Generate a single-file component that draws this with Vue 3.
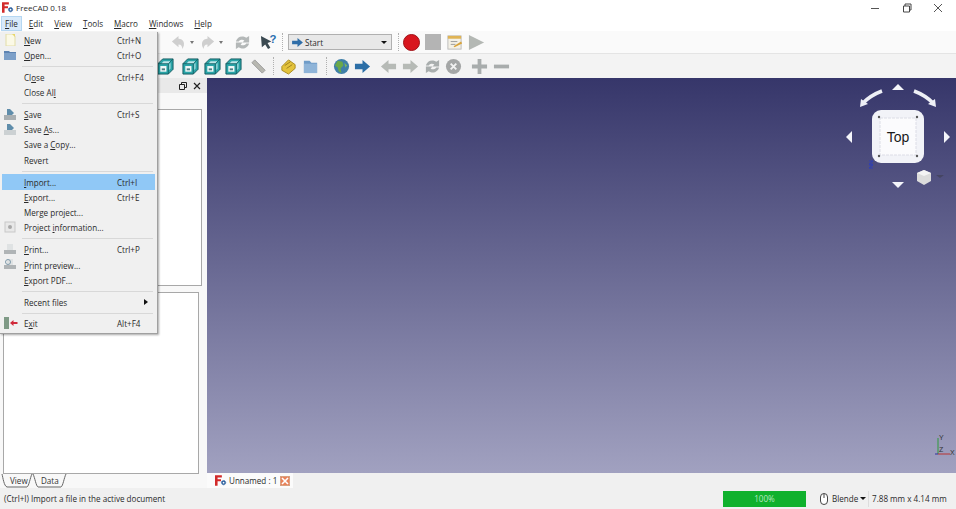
<script setup>
const menus = ["File", "Edit", "View", "Tools", "Macro", "Windows", "Help"];

const fileMenu = [
  { pre: "", key: "N", post: "ew", shortcut: "Ctrl+N", icon: "new" },
  { pre: "", key: "O", post: "pen...", shortcut: "Ctrl+O", icon: "open" },
  { sep: true },
  { pre: "Cl", key: "o", post: "se", shortcut: "Ctrl+F4" },
  { pre: "Close Al", key: "l", post: "" },
  { sep: true },
  { pre: "", key: "S", post: "ave", shortcut: "Ctrl+S", icon: "save" },
  { pre: "Save ", key: "A", post: "s...", icon: "saveas" },
  { pre: "Save a ", key: "C", post: "opy..." },
  { pre: "Revert", key: "", post: "" },
  { sep: true },
  { pre: "", key: "I", post: "mport...", shortcut: "Ctrl+I", active: true },
  { pre: "", key: "E", post: "xport...", shortcut: "Ctrl+E" },
  { pre: "Merge project...", key: "", post: "" },
  { pre: "Project ", key: "i", post: "nformation...", icon: "info" },
  { sep: true },
  { pre: "", key: "P", post: "rint...", shortcut: "Ctrl+P", icon: "print" },
  { pre: "", key: "P", post: "rint preview...", icon: "preview" },
  { pre: "", key: "E", post: "xport PDF..." },
  { sep: true },
  { pre: "Recent files", key: "", post: "", arrow: true },
  { sep: true },
  { pre: "E", key: "x", post: "it", shortcut: "Alt+F4", icon: "exit" },
];

// spacing classes of the four view cubes in the second toolbar
const viewCubes = ["ml0", "ml8", "ml5", "ml4"];
</script>

<template>
  <div class="window">
    <header class="titlebar">
      <svg class="app-logo" viewBox="0 0 14 12" width="12" height="11">
        <path d="M0 0h8v2.500H3v2h4v2.400H3V12H0z" fill="#d22a2a" />
        <circle cx="10" cy="8.500" r="2.500" fill="#2b5f9e" stroke="#2b5f9e" stroke-dasharray="1 0.600" />
        <circle cx="10" cy="8.500" r="1" fill="#fff" />
      </svg>
      <span class="title">FreeCAD 0.18</span>
      <div class="win-buttons">
        <svg viewBox="0 0 10 10" width="10" height="10"><path d="M0 5.500h8" stroke="#555" fill="none" /></svg>
        <svg viewBox="0 0 10 10" width="10" height="10"><path d="M1.500 3h6v6h-6zM3 3V1h6v6H7.500" stroke="#444" fill="none" /></svg>
        <svg viewBox="0 0 10 10" width="10" height="10"><path d="M1 1l8 8M9 1l-8 8" stroke="#555" fill="none" /></svg>
      </div>
    </header>

    <nav class="menubar">
      <span v-for="(m, i) in menus" :key="m" class="menu-title" :class="{ open: i === 0 }"><u>{{ m[0] }}</u>{{ m.slice(1) }}</span>
    </nav>

    <div class="toolbar row-one">
      <svg class="tool" viewBox="0 0 18 18"><path d="M9 2L2 8l7 6v-3c3 0 4 2 4 5 4-6 1-11-4-11z" fill="#cfcfcf" /></svg>
      <span class="drop"></span>
      <svg class="tool ml5" viewBox="0 0 18 18"><path d="M9 2l7 6-7 6v-3c-3 0-4 2-4 5-4-6-1-11 4-11z" fill="#cfcfcf" /></svg>
      <span class="drop"></span>
      <svg class="tool ml11" viewBox="0 0 18 18"><path d="M2 8a7 7 0 0 1 11-4l3-2v7h-7l2-2A4 4 0 0 0 5 8zM16 10a7 7 0 0 1-11 4l-3 2V9h7l-2 2a4 4 0 0 0 6-1z" fill="#b4b8b8" /></svg>
      <svg class="tool ml9" viewBox="0 0 18 18">
        <path d="M1 2l11 6-4 1.500 3 5-2.500 1.500-3-5L2 14z" fill="#3b4a52" />
        <text x="10" y="10" font-size="12" font-weight="700" fill="#2a6fb0" font-family="Liberation Sans, sans-serif">?</text>
      </svg>
      <span class="grip ml5"></span>
      <div class="combo ml5">
        <svg viewBox="0 0 12 10" width="11" height="9"><path d="M0 3h6V0l6 5-6 5V7H0z" fill="#2f6ea8" /></svg>
        <span>Start</span>
        <i class="combo-caret"></i>
      </div>
      <span class="grip ml6"></span>
      <span class="record"></span>
      <span class="stop ml5"></span>
      <svg class="tool ml5" viewBox="0 0 18 18">
        <rect x="2" y="2" width="14" height="14" fill="#f4f1e6" stroke="#bbb" />
        <path d="M2 2h14v3H2z" fill="#e0b455" />
        <path d="M5 8h7M5 11h5" stroke="#999" />
        <path d="M8 13l8-5 1 2-8 4z" fill="#d8a33a" />
      </svg>
      <svg class="tool ml5" viewBox="0 0 18 18"><path d="M1 1l16 8-16 8z" fill="#b4b8b4" /></svg>
    </div>

    <div class="toolbar row-two">
      <svg v-for="c in viewCubes" :key="c" class="tool" :class="c" viewBox="0 0 18 18">
        <path d="M1 6l5-5h11v11l-5 5H1z" fill="#2aa5a8" stroke="#125a60" />
        <path d="M3.500 8.500H10v6H3.500z" fill="#f2f8f8" />
        <path d="M5 11h3.500v2H5z" fill="#4c7f84" />
        <path d="M7 3.500h7.500L12 6H4.500z" fill="#bfe6e8" />
        <path d="M14.500 5v6L12.500 13V7z" fill="#8ad0d2" />
        <path d="M1 6h11v11M12 6l5-5" fill="none" stroke="#125a60" stroke-width="0.800" />
      </svg>
      <svg class="tool ml8" viewBox="0 0 18 18"><path d="M5 2l11 11-3 3L2 5z" fill="#b7b7b0" stroke="#999" /></svg>
      <span class="grip narrow"></span>
      <svg class="tool ml6" viewBox="0 0 18 18">
        <path d="M2 9l7-7 7 5v4l-7 6-7-4z" fill="#e4c33c" stroke="#a88a1e" />
        <path d="M5 8l6-4M7 11l6-4" stroke="#9a7f1c" fill="none" />
      </svg>
      <svg class="tool ml5" viewBox="0 0 18 18">
        <path d="M2 3h6l2 2h6v11H2z" fill="#6f9cc8" />
        <path d="M2 6h14v10H2z" fill="#8fb4d8" />
      </svg>
      <span class="grip narrow"></span>
      <svg class="tool ml6" viewBox="0 0 18 18">
        <circle cx="9" cy="9" r="8" fill="#3f7fa8" />
        <path d="M5 3l5 1 1 4-3 3 1 5-3-2-1-4-3-2z" fill="#6aa84a" />
        <path d="M12 5l3 3-2 2z" fill="#7db85a" />
      </svg>
      <svg class="tool ml4" viewBox="0 0 18 18"><path d="M1 6h8V2l8 7-8 7v-4H1z" fill="#2b6ea6" /></svg>
      <svg class="tool ml9" viewBox="0 0 18 18"><path d="M17 6H9V2L1 9l8 7v-4h8z" fill="#b6bab6" /></svg>
      <svg class="tool ml5" viewBox="0 0 18 18"><path d="M1 6h8V2l8 7-8 7v-4H1z" fill="#b6bab6" /></svg>
      <svg class="tool ml5" viewBox="0 0 18 18"><path d="M2 8a7 7 0 0 1 11-4l3-2v7h-7l2-2A4 4 0 0 0 5 8zM16 10a7 7 0 0 1-11 4l-3 2V9h7l-2 2a4 4 0 0 0 6-1z" fill="#a9aeae" /></svg>
      <svg class="tool ml4" viewBox="0 0 18 18">
        <circle cx="9" cy="9" r="8" fill="#a4a6a6" />
        <path d="M6 6l6 6M12 6l-6 6" stroke="#f2f2f2" stroke-width="2" />
      </svg>
      <svg class="tool ml9" viewBox="0 0 18 18"><path d="M7 1h4v6h6v4h-6v6H7v-6H1V7h6z" fill="#a8acac" /></svg>
      <svg class="tool ml5" viewBox="0 0 18 18"><path d="M1 7h16v4H1z" fill="#a8acac" /></svg>
    </div>

    <main class="workspace">
      <aside class="dock">
        <div class="dock-title">
          <svg viewBox="0 0 8 8" width="8" height="8"><path d="M0.500 2.500h5v5h-5zM2.500 2.500V0.500h5v5H5.500" fill="none" stroke="#222" /></svg>
          <svg viewBox="0 0 8 8" width="8" height="8"><path d="M1 1l6 6M7 1l-6 6" fill="none" stroke="#222" stroke-width="1.200" /></svg>
        </div>
        <div class="tree-box"></div>
        <div class="prop-box"></div>
        <svg class="dock-tabs" viewBox="0 0 70 14" width="70" height="14">
          <path d="M2 0C3 4 4 12 7 13H27C29 12 30 4 32 0" fill="none" stroke="#666" />
          <path d="M33 0C35 4 36 12 38 13H61C63 12 64 4 66 0" fill="none" stroke="#666" />
          <text x="10" y="10">View</text>
          <text x="41" y="10">Data</text>
        </svg>
      </aside>

      <section class="view-column">
        <div class="viewport">
          <svg class="navicube" viewBox="0 8 126 122" width="126" height="122">
            <path d="M52 21C44 24 38 28 33 33" fill="none" stroke="#eef0f6" stroke-width="3.500" />
            <path d="M30 37l1-8 7 5z" fill="#eef0f6" />
            <path d="M84 21C92 24 98 28 103 33" fill="none" stroke="#eef0f6" stroke-width="3.500" />
            <path d="M106 37l-1-8-7 5z" fill="#eef0f6" />
            <path d="M68 14l-6 6h12z" fill="#f4f5fa" />
            <path d="M22 61v12l-6-6z" fill="#f4f5fa" />
            <path d="M114 61v12l6-6z" fill="#f4f5fa" />
            <path d="M62 112h12l-6 6z" fill="#f4f5fa" />
            <rect x="42" y="40" width="52" height="53" rx="9" fill="#f2f3f8" />
            <rect x="50" y="48" width="36" height="37" fill="#fbfbfd" stroke="#dcdde6" stroke-dasharray="3 1" />
            <circle cx="49" cy="47" r="1.200" fill="#555" />
            <circle cx="87" cy="47" r="1.200" fill="#555" />
            <circle cx="49" cy="86" r="1.200" fill="#555" />
            <circle cx="87" cy="86" r="1.200" fill="#555" />
            <text x="68" y="72" text-anchor="middle" font-size="14" fill="#1a1a1a" font-family="Liberation Sans, sans-serif">Top</text>
            <path d="M39 91h4l-4 3h4M39 95h4l-4 3h4" stroke="#2a3cc0" fill="none" stroke-width="0.800" />
            <path d="M87 103l7-3 7 3v8l-7 4-7-4z" fill="#dcdcdc" />
            <path d="M87 103l7 3 7-3-7-3z" fill="#f4f4f4" />
            <path d="M106 105h8l-4 3z" fill="#454562" />
          </svg>
          <svg class="axis" viewBox="0 0 22 24" width="22" height="24">
            <path d="M4 4v16" stroke="#2f9a3c" />
            <path d="M4 20h12" stroke="#b83232" />
            <path d="M1 20h3" stroke="#3030a0" />
            <text x="5" y="6" font-size="7" fill="#333" font-family="Liberation Sans, sans-serif">Y</text>
            <text x="5" y="18" font-size="7" fill="#333" font-family="Liberation Sans, sans-serif">Z</text>
            <text x="16" y="21" font-size="7" fill="#333" font-family="Liberation Sans, sans-serif">X</text>
          </svg>
        </div>
        <div class="doc-tabs">
          <div class="doc-tab">
            <svg viewBox="0 0 14 12" width="12" height="11">
              <path d="M0 0h8v2.500H3v2h4v2.400H3V12H0z" fill="#d22a2a" />
              <circle cx="10" cy="8.500" r="2.500" fill="#2b5f9e" stroke="#2b5f9e" stroke-dasharray="1 0.600" />
              <circle cx="10" cy="8.500" r="1" fill="#fff" />
            </svg>
            <span class="doc-name">Unnamed : 1</span>
            <span class="doc-close">
              <svg viewBox="0 0 8 8" width="8" height="8"><path d="M1 1l6 6M7 1l-6 6" stroke="#fff" stroke-width="1.600" /></svg>
            </span>
          </div>
        </div>
      </section>
    </main>

    <footer class="statusbar">
      <span class="status-text">(Ctrl+I) Import a file in the active document</span>
      <div class="progress">100%</div>
      <svg class="mouse" viewBox="0 0 8 12" width="8" height="12">
        <rect x="0.500" y="0.500" width="7" height="11" rx="3.500" fill="#fff" stroke="#444" />
        <path d="M4 1v4" stroke="#444" />
      </svg>
      <span class="nav-style">Blende</span>
      <i class="nav-caret"></i>
      <span class="status-sep"></span>
      <span class="dimensions">7.88 mm x 4.14 mm</span>
    </footer>

    <div class="file-menu">
      <template v-for="(item, i) in fileMenu" :key="i">
        <div v-if="item.sep" class="menu-sep"></div>
        <div v-else class="menu-item" :class="{ active: item.active }">
          <span class="menu-icon">
            <svg v-if="item.icon === 'new'" viewBox="0 0 12 12" width="12" height="12">
              <path d="M2 0h7l2 2v10H2z" fill="#fbf9e6" stroke="#e2dda8" />
              <path d="M8 0h3v3z" fill="#e8d76a" />
            </svg>
            <svg v-else-if="item.icon === 'open'" viewBox="0 0 12 12" width="12" height="12">
              <path d="M0 2h5l1 1h6v8H0z" fill="#5e84b2" />
              <path d="M0 4h12v7H0z" fill="#7da0c8" />
            </svg>
            <svg v-else-if="item.icon === 'save' || item.icon === 'saveas'" viewBox="0 0 12 12" width="12" height="12">
              <path d="M0 7h12v5H0z" :fill="item.icon === 'save' ? '#a9afb2' : '#ccd1d3'" />
              <path d="M3 1h3l4 4-2 2H3z" fill="#5f8dab" />
            </svg>
            <svg v-else-if="item.icon === 'info'" viewBox="0 0 12 12" width="12" height="12">
              <rect x="1" y="1" width="10" height="10" fill="#e8e8e8" stroke="#c8c8c8" />
              <circle cx="6" cy="6" r="2" fill="#a8a8a8" />
            </svg>
            <svg v-else-if="item.icon === 'print' || item.icon === 'preview'" viewBox="0 0 12 12" width="12" height="12">
              <path d="M0 7h12v4H0z" fill="#b0b4b6" />
              <path d="M3 1h6v6H3z" fill="#dfe2e3" />
              <circle v-if="item.icon === 'preview'" cx="4" cy="4" r="2.500" fill="none" stroke="#7f9aaa" />
            </svg>
            <svg v-else-if="item.icon === 'exit'" viewBox="0 0 14 12" width="14" height="12">
              <path d="M0 0h5v12H0z" fill="#7f9a86" />
              <path d="M6 6l3.500-3v2h4v2h-4v2z" fill="#d02a3a" />
            </svg>
          </span>
          <span class="menu-label">{{ item.pre }}<u v-if="item.key">{{ item.key }}</u>{{ item.post }}</span>
          <span v-if="item.shortcut" class="menu-shortcut">{{ item.shortcut }}</span>
          <i v-if="item.arrow" class="menu-arrow"></i>
        </div>
      </template>
    </div>
  </div>
</template>

<style scoped>
.window {
  position: relative;
  width: 956px;
  height: 509px;
  display: flex;
  flex-direction: column;
  overflow: hidden;
  background: #f0f0f0;
  color: #2a2a2a;
  font-family: "Open Sans", "Noto Sans", sans-serif;
  font-size: 8.100px;
}

.titlebar {
  height: 15px;
  flex: none;
  display: flex;
  align-items: center;
  padding-left: 2px;
  background: #fff;
}

.title {
  margin-left: 2px;
  font-size: 8px;
}

.win-buttons {
  margin-left: auto;
  display: flex;
  gap: 21px;
  padding-right: 13px;
}

.menubar {
  height: 16px;
  flex: none;
  display: flex;
  align-items: center;
  gap: 3px;
  padding-left: 1px;
  background: #fff;
}

.menu-title {
  padding: 0 3px;
  line-height: 13px;
  border: 1px solid transparent;
}

.menu-title.open {
  background: #d8eafa;
  border-color: #b5d7f2;
}

.toolbar {
  display: flex;
  align-items: center;
  flex: none;
}

.row-one {
  height: 22px;
  padding-left: 170px;
  background: #fafafa;
}

.row-two {
  height: 25px;
  box-sizing: border-box;
  padding-left: 156.500px;
  background: #f3f3f3;
  border-top: 1px solid #e4e4e4;
}

.tool {
  width: 17px;
  height: 17px;
  flex: none;
}

.ml0 { margin-left: 0; }
.ml4 { margin-left: 4px; }
.ml5 { margin-left: 5px; }
.ml6 { margin-left: 6px; }
.ml8 { margin-left: 8px; }
.ml9 { margin-left: 9px; }
.ml11 { margin-left: 11px; }

.drop {
  width: 0;
  height: 0;
  margin-left: 3px;
  border: 2.500px solid transparent;
  border-top: 3px solid #777;
  border-bottom: 0;
}

.grip {
  width: 1px;
  height: 18px;
  border-left: 1px dotted #b0b0b0;
  box-sizing: border-box;
}

.grip.narrow {
  margin-left: 6.500px;
}

.combo {
  width: 104px;
  height: 16px;
  flex: none;
  display: flex;
  align-items: center;
  gap: 2px;
  padding: 0 3px;
  box-sizing: border-box;
  background: #e8e8e8;
  border: 1px solid #b0b0b0;
}

.combo-caret {
  margin-left: auto;
  margin-right: 1px;
  border: 3px solid transparent;
  border-top: 3px solid #111;
  border-bottom: 0;
}

.record {
  width: 17px;
  height: 17px;
  margin-left: 4px;
  border-radius: 50%;
  background: #d8161e;
  border: 1px solid #a01218;
  box-sizing: border-box;
}

.stop {
  width: 16px;
  height: 16px;
  background: #b4b4b4;
}

.workspace {
  flex: 1;
  min-height: 0;
  display: flex;
}

.dock {
  width: 207px;
  flex: none;
  display: flex;
  flex-direction: column;
  background: #f8f8f8;
  box-sizing: border-box;
  padding-left: 3px;
}

.dock-title {
  height: 15px;
  flex: none;
  display: flex;
  align-items: center;
  justify-content: flex-end;
  gap: 6px;
  padding-right: 6px;
  background: #e9e9e9;
  margin-left: -3px;
}

.tree-box {
  height: 177px;
  flex: none;
  margin: 16px 5px 0 0;
  background: #fff;
  border: 1px solid #a8a8a8;
  box-sizing: border-box;
}

.prop-box {
  flex: 1;
  margin: 6px 8px 0 0;
  background: #fff;
  border: 1px solid #a8a8a8;
  box-sizing: border-box;
}

.dock-tabs {
  flex: none;
  margin-left: -3px;
  font-size: 8.100px;
  fill: #333;
}

.view-column {
  flex: 1;
  display: flex;
  flex-direction: column;
  min-width: 0;
}

.viewport {
  position: relative;
  flex: 1;
  background: linear-gradient(#36366a, #a1a1c0);
}

.navicube {
  position: absolute;
  top: 0;
  right: 0;
}

.axis {
  position: absolute;
  right: 0;
  bottom: 15px;
}

.doc-tabs {
  height: 15px;
  flex: none;
  background: #f0f0f0;
}

.doc-tab {
  width: 86px;
  height: 15px;
  display: flex;
  align-items: center;
  padding-left: 8px;
  box-sizing: border-box;
  background: #fbfbfb;
}

.doc-name {
  margin-left: 2px;
  white-space: nowrap;
}

.doc-close {
  width: 10px;
  height: 10px;
  flex: none;
  display: flex;
  align-items: center;
  justify-content: center;
  margin-left: 3px;
  background: #e8825a;
  border: 1px solid #d8a080;
  box-sizing: border-box;
}

.statusbar {
  height: 21px;
  flex: none;
  display: flex;
  align-items: center;
  padding-left: 4px;
  background: #f0f0f0;
}

.status-text {
  width: 719px;
  flex: none;
}

.progress {
  width: 83px;
  height: 16px;
  line-height: 16px;
  flex: none;
  text-align: center;
  color: #b8e8c0;
  background: #10b12d;
}

.mouse {
  margin-left: 14px;
}

.nav-style {
  width: 27px;
  margin-left: 4px;
  overflow: hidden;
}

.nav-caret {
  margin-left: 1px;
  border: 3px solid transparent;
  border-top: 3px solid #111;
  border-bottom: 0;
}

.status-sep {
  width: 1px;
  height: 16px;
  margin: 0 3px 0 2px;
  background: #ddd;
}

.file-menu {
  position: absolute;
  left: 0;
  top: 32px;
  width: 158px;
  height: 302px;
  box-sizing: border-box;
  padding: 0.500px 2px 0;
  background: #f0f0f0;
  border-right: 1px solid #a0a0a0;
  border-bottom: 1px solid #a0a0a0;
  box-shadow: 1px 1px 2px rgba(0, 0, 0, 0.35);
}

.menu-item {
  height: 15.300px;
  display: flex;
  align-items: center;
  padding-left: 22px;
  position: relative;
}

.menu-item.active {
  background: #90c8f6;
}

.menu-icon {
  position: absolute;
  left: 2px;
  top: 1px;
}

.menu-label {
  flex: 1;
}

.menu-shortcut {
  width: 38px;
}

.menu-arrow {
  position: absolute;
  right: 7px;
  top: 5px;
  border: 3px solid transparent;
  border-left: 4px solid #111;
  border-right: 0;
}

.menu-sep {
  height: 1px;
  margin: 2.750px 2px 2.750px 20px;
  background: #d8d8d8;
}
</style>
